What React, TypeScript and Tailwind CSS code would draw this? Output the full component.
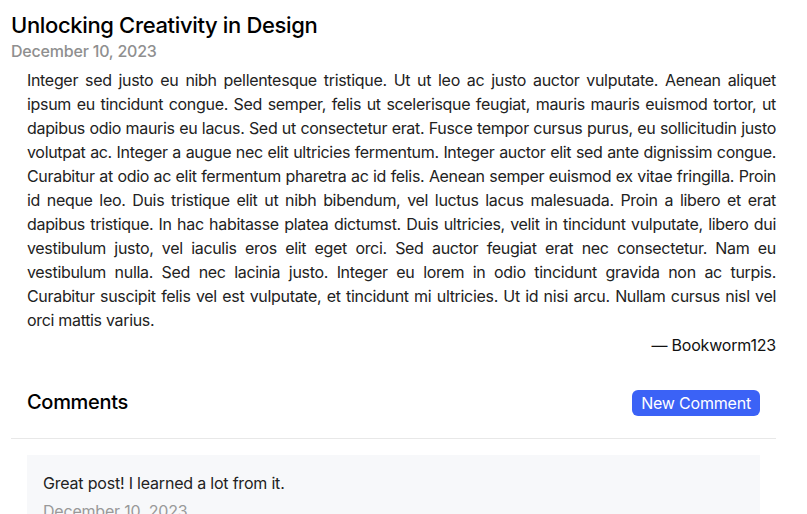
import React from "react";

const body =
  "Integer sed justo eu nibh pellentesque tristique. Ut ut leo ac justo auctor vulputate. Aenean aliquet ipsum eu tincidunt congue. Sed semper, felis ut scelerisque feugiat, mauris mauris euismod tortor, ut dapibus odio mauris eu lacus. Sed ut consectetur erat. Fusce tempor cursus purus, eu sollicitudin justo volutpat ac. Integer a augue nec elit ultricies fermentum. Integer auctor elit sed ante dignissim congue. Curabitur at odio ac elit fermentum pharetra ac id felis. Aenean semper euismod ex vitae fringilla. Proin id neque leo. Duis tristique elit ut nibh bibendum, vel luctus lacus malesuada. Proin a libero et erat dapibus tristique. In hac habitasse platea dictumst. Duis ultricies, velit in tincidunt vulputate, libero dui vestibulum justo, vel iaculis eros elit eget orci. Sed auctor feugiat erat nec consectetur. Nam eu vestibulum nulla. Sed nec lacinia justo. Integer eu lorem in odio tincidunt gravida non ac turpis. Curabitur suscipit felis vel est vulputate, et tincidunt mi ultricies. Ut id nisi arcu. Nullam cursus nisl vel orci mattis varius.";

export default function App() {
  return (
    <div className="w-[807px] h-[514px] overflow-hidden bg-white text-black font-['Inter',sans-serif] tracking-[-0.2px]">
      <div className="pl-[11px] pr-[31px] pt-[11px]">
        <h1 className="text-[22px] leading-[28px] font-medium tracking-[-0.35px]">Unlocking Creativity in Design</h1>
        <div className="text-[16px] leading-[24px] font-medium text-[#8f8f8f]">December 10, 2023</div>
        <p className="pl-4 mt-[5px] text-[16px] leading-[24px] text-[#222] text-justify tracking-[-0.32px]">{body}</p>
        <div className="mt-[1px] text-right text-[16px] leading-[24px] text-[#111]">— Bookworm123</div>
        <div className="mt-[33px] px-4 flex items-center justify-between">
          <h2 className="text-[20px] leading-[28px] font-medium tracking-[-0.3px] -mt-[3px]">Comments</h2>
          <button className="h-[26px] px-[9px] rounded-[6px] bg-[#3b62f6] text-white text-[16px] leading-[24px]">
            New Comment
          </button>
        </div>
        <div className="mt-[22px] border-t border-[#e8e8e8]" />
        <div className="mt-[16px] mx-4 bg-[#f7f8fa] px-4 pt-[16px] pb-4">
          <div className="text-[16px] leading-[24px] text-[#222]">Great post! I learned a lot from it.</div>
          <div className="mt-[4px] text-[16px] leading-[24px] text-[#999]">December 10, 2023</div>
        </div>
      </div>
    </div>
  );
}
